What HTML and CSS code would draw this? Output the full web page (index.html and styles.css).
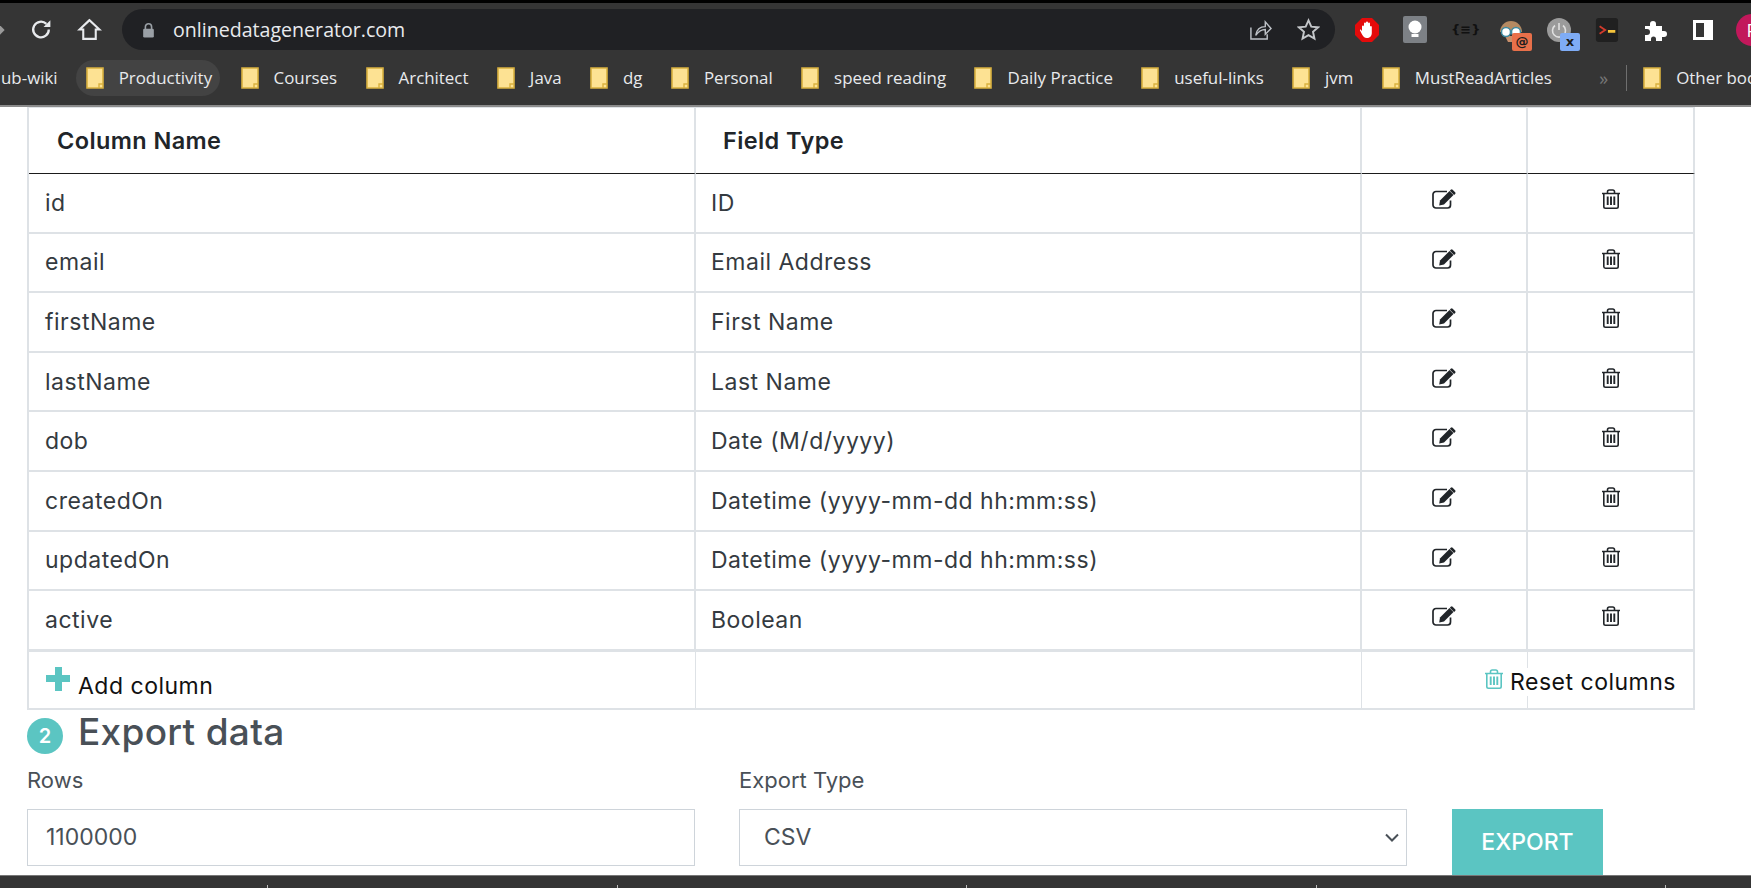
FILE: index.html
```html
<!DOCTYPE html>
<html>
<head>
    <meta charset="utf-8">
    <title>onlinedatagenerator.com</title>
    <link rel="stylesheet" href="styles.css">
</head>
<body>
    <svg class="defs" xmlns="http://www.w3.org/2000/svg">
        <symbol id="folder" viewBox="0 0 18 22">
            <path d="M1 1h16v20H1z" fill="#fde293" stroke="#d9b13f" stroke-width="1.6"/>
            <path d="M13 21v-4h4" fill="none" stroke="#d9b13f" stroke-width="1.4"/>
        </symbol>
        <symbol id="edit" viewBox="0 0 24 20">
            <path d="M18.500 11.500v4.500a3 3 0 0 1-3 3H4a3 3 0 0 1-3-3V5.500a3 3 0 0 1 3-3h11" fill="none" stroke="currentColor" stroke-width="1.700"/>
            <path d="M8 11.500 17.500 2l4 4-9.500 9.500-4.800 1z" fill="currentColor"/>
            <path d="M18.800.7a1.300 1.300 0 0 1 1.800 0l2.500 2.500a1.300 1.300 0 0 1 0 1.800l-1 1-4.300-4.300z" fill="currentColor"/>
        </symbol>
        <symbol id="trash" viewBox="0 0 20 20">
            <path d="M1 4.500h18M6.500 4.500V2.800a1.800 1.800 0 0 1 1.800-1.800h3.400a1.800 1.800 0 0 1 1.800 1.800v1.700M2.800 4.500v13a1.700 1.700 0 0 0 1.700 1.700h11a1.700 1.700 0 0 0 1.700-1.700v-13" fill="none" stroke="currentColor" stroke-width="1.600"/>
            <path d="M6.700 7.500v8.500M10 7.500v8.500M13.300 7.500v8.500" stroke="currentColor" stroke-width="1.900"/>
        </symbol>
    </svg>

    <div class="top-strip"></div>

    <header class="toolbar">
        <span class="back-arrow"></span>
        <svg class="tool reload" viewBox="0 0 24 24"><path d="M19 12a7.500 7.500 0 1 1-2.300-5.400" fill="none" stroke="#e8eaed" stroke-width="2.200"/><path d="M20.500 3v6.500H14z" fill="#e8eaed"/></svg>
        <svg class="tool home" viewBox="0 0 24 24"><path d="M12 3 2.500 12H6v9h12v-9h3.500z" fill="none" stroke="#e8eaed" stroke-width="2"/></svg>
        <div class="omnibox">
            <svg class="lock" viewBox="0 0 14 18"><path d="M3.500 8V5.500a3.500 3.500 0 0 1 7 0V8" fill="none" stroke="#9aa0a6" stroke-width="1.800"/><rect x="1" y="7.500" width="12" height="10" rx="1.500" fill="#9aa0a6"/></svg>
            <span class="url">onlinedatagenerator.com</span>
            <svg class="omni-icon share" viewBox="0 0 24 24"><path d="M2 10v12h17v-5" fill="none" stroke="#bdc1c6" stroke-width="1.500"/><path d="M7 18c1-6 5-9 10-9V4l6 7-6 6v-5c-4 0-7 2-10 6z" fill="none" stroke="#bdc1c6" stroke-width="1.500"/></svg>
            <svg class="omni-icon star" viewBox="0 0 24 24"><path d="m12 2.500 2.900 6.500 7.100.7-5.300 4.700 1.500 7L12 17.800l-6.200 3.600 1.500-7L2 9.700 9.100 9z" fill="none" stroke="#c4c7ca" stroke-width="2"/></svg>
        </div>
        <div class="extensions">
            <svg class="ext" viewBox="0 0 24 24"><path d="M7 0h10l7 7v10l-7 7H7l-7-7V7z" fill="#e40b0b"/><path d="M7 13V8.500a1 1 0 0 1 2 0V5.500a1 1 0 0 1 2 0V4.500a1 1 0 0 1 2 0v1a1 1 0 0 1 2 0v3.500a.9.900 0 0 1 1.800 0V15c0 3-2 5-5 5-2.500 0-3.500-1.500-5-4l-1.800-3.500c-.4-1 .8-1.300 1-.500z" fill="#fff"/></svg>
            <svg class="ext bulb" viewBox="0 0 24 27"><rect width="24" height="27" rx="2" fill="#7d8186"/><circle cx="12" cy="11" r="6.500" fill="#fff"/><rect x="8.500" y="18" width="7" height="3" fill="#fff"/></svg>
            <span class="ext ext-json">{≡}</span>
            <span class="ext ext-badged">
                <svg viewBox="0 0 24 24"><path d="M1 14a11 11 0 0 1 22 0z" fill="#b58a62"/><path d="M6 18h12l-3 6H9z" fill="#c98f6b"/><circle cx="7" cy="14" r="4.500" fill="#fff" stroke="#3d8aa0" stroke-width="1.500"/><circle cx="17" cy="14" r="4.500" fill="#fff" stroke="#3d8aa0" stroke-width="1.500"/></svg>
                <b class="ext-badge badge-orange">@</b>
            </span>
            <span class="ext ext-badged">
                <svg viewBox="0 0 24 24"><circle cx="12" cy="12" r="12" fill="#9b9b9b"/><path d="M12 5v7M8 7.500a6.500 6.500 0 1 0 8 0" fill="none" stroke="#e0e0e0" stroke-width="1.600"/></svg>
                <b class="ext-badge badge-blue">x</b>
            </span>
            <svg class="ext" viewBox="0 0 24 26"><rect width="24" height="26" rx="3" fill="#202020"/><path d="M4 9l6 4-6 4" fill="none" stroke="#d33b2c" stroke-width="2"/><rect x="13" y="13" width="8" height="3" fill="#f5c33b"/></svg>
            <svg class="ext puzzle" viewBox="0 0 24 24"><path d="M2 8h5V6a3 3 0 0 1 6 0v2h6v5h2a3 3 0 0 1 0 6h-2v4h-6v-2a2.500 2.500 0 0 0-5 0v2H2v-6h2a3 3 0 0 0 0-6H2z" fill="#fff"/></svg>
            <span class="side-panel"></span>
            <span class="profile">P</span>
        </div>
    </header>

    <nav class="bookmarks">
        <span class="bookmark cut">ub-wiki</span>
        <a class="bookmark hovered"><svg class="folder"><use href="#folder"/></svg>Productivity</a>
        <a class="bookmark"><svg class="folder"><use href="#folder"/></svg>Courses</a>
        <a class="bookmark"><svg class="folder"><use href="#folder"/></svg>Architect</a>
        <a class="bookmark"><svg class="folder"><use href="#folder"/></svg>Java</a>
        <a class="bookmark"><svg class="folder"><use href="#folder"/></svg>dg</a>
        <a class="bookmark"><svg class="folder"><use href="#folder"/></svg>Personal</a>
        <a class="bookmark"><svg class="folder"><use href="#folder"/></svg>speed reading</a>
        <a class="bookmark"><svg class="folder"><use href="#folder"/></svg>Daily Practice</a>
        <a class="bookmark"><svg class="folder"><use href="#folder"/></svg>useful-links</a>
        <a class="bookmark"><svg class="folder"><use href="#folder"/></svg>jvm</a>
        <a class="bookmark"><svg class="folder"><use href="#folder"/></svg>MustReadArticles</a>
        <span class="more">»</span>
        <span class="bm-sep"></span>
        <a class="bookmark"><svg class="folder"><use href="#folder"/></svg>Other bookmarks</a>
    </nav>

    <main class="page">
        <section class="columns">
            <div class="cell head">Column Name</div>
            <div class="cell head">Field Type</div>
            <div class="cell head"></div>
            <div class="cell head"></div>

            <div class="cell">id</div>
            <div class="cell">ID</div>
            <div class="cell action"><svg class="ico-edit"><use href="#edit"/></svg></div>
            <div class="cell action"><svg class="ico-trash"><use href="#trash"/></svg></div>

            <div class="cell">email</div>
            <div class="cell">Email Address</div>
            <div class="cell action"><svg class="ico-edit"><use href="#edit"/></svg></div>
            <div class="cell action"><svg class="ico-trash"><use href="#trash"/></svg></div>

            <div class="cell">firstName</div>
            <div class="cell">First Name</div>
            <div class="cell action"><svg class="ico-edit"><use href="#edit"/></svg></div>
            <div class="cell action"><svg class="ico-trash"><use href="#trash"/></svg></div>

            <div class="cell">lastName</div>
            <div class="cell">Last Name</div>
            <div class="cell action"><svg class="ico-edit"><use href="#edit"/></svg></div>
            <div class="cell action"><svg class="ico-trash"><use href="#trash"/></svg></div>

            <div class="cell">dob</div>
            <div class="cell">Date (M/d/yyyy)</div>
            <div class="cell action"><svg class="ico-edit"><use href="#edit"/></svg></div>
            <div class="cell action"><svg class="ico-trash"><use href="#trash"/></svg></div>

            <div class="cell">createdOn</div>
            <div class="cell">Datetime (yyyy-mm-dd hh:mm:ss)</div>
            <div class="cell action"><svg class="ico-edit"><use href="#edit"/></svg></div>
            <div class="cell action"><svg class="ico-trash"><use href="#trash"/></svg></div>

            <div class="cell">updatedOn</div>
            <div class="cell">Datetime (yyyy-mm-dd hh:mm:ss)</div>
            <div class="cell action"><svg class="ico-edit"><use href="#edit"/></svg></div>
            <div class="cell action"><svg class="ico-trash"><use href="#trash"/></svg></div>

            <div class="cell">active</div>
            <div class="cell">Boolean</div>
            <div class="cell action"><svg class="ico-edit"><use href="#edit"/></svg></div>
            <div class="cell action"><svg class="ico-trash"><use href="#trash"/></svg></div>

            <div class="cell foot add-col"><span class="plus"></span><span class="add-text">Add column</span></div>
            <div class="cell foot"></div>
            <div class="cell foot"></div>
            <div class="cell foot reset-cell">
                <a class="reset"><svg class="ico-trash teal"><use href="#trash"/></svg>Reset columns</a>
            </div>
        </section>

        <h2 class="export-title"><span class="step">2</span>Export data</h2>

        <form class="export-form">
            <label class="field">
                <span class="field-label">Rows</span>
                <input class="control" type="text" value="1100000">
            </label>
            <label class="field">
                <span class="field-label">Export Type</span>
                <span class="select-wrap">
                    <select class="control">
                        <option>CSV</option>
                    </select>
                    <svg class="chevron" viewBox="0 0 14 9"><path d="M1 1.500 7 7.500l6-6" fill="none" stroke="#495057" stroke-width="2"/></svg>
                </span>
            </label>
            <button class="export-btn" type="button">EXPORT</button>
        </form>
    </main>

    <footer class="bottom-bar">
        <i></i><i></i><i></i><i></i><i></i>
    </footer>
</body>
</html>
```

FILE: styles.css
```css
* {
    box-sizing: border-box;
}

html, body {
    margin: 0;
    height: 100%;
}

body {
    display: flex;
    flex-direction: column;
    height: 888px;
    overflow: hidden;
    background: #fff;
    font-family: Inter, "Open Sans", sans-serif;
    color: #212529;
}

.defs {
    display: none;
}

/* browser chrome */
.top-strip {
    height: 3px;
    background: #000;
    flex: none;
}

.toolbar {
    flex: none;
    height: 50px;
    background: #353535;
    display: flex;
    align-items: center;
    padding-top: 3px;
    position: relative;
    overflow: hidden;
}

.back-arrow {
    flex: none;
    width: 8px;
    height: 8px;
    margin-left: -5px;
    background: #9a9a9a;
    transform: rotate(45deg);
}

.tool {
    flex: none;
    width: 25px;
    height: 25px;
}

.reload {
    margin-left: 25.500px;
}

.home {
    margin-left: 23px;
}

.omnibox {
    flex: none;
    margin-left: 20.500px;
    width: 1213px;
    height: 41px;
    border-radius: 21px;
    background: #202124;
    display: flex;
    align-items: center;
    padding: 0 15px 0 20px;
}

.lock {
    width: 13px;
    height: 16px;
}

.url {
    margin-left: 18px;
    flex: 1;
    font-family: "Open Sans", sans-serif;
    font-size: 19.600px;
    color: #e8eaed;
}

.omni-icon {
    width: 23px;
    height: 23px;
}

.star {
    margin-left: 25px;
}

.extensions {
    display: flex;
    align-items: center;
    margin-left: 20px;
    gap: 24px;
    flex: none;
}

.ext {
    width: 24px;
    height: 24px;
    flex: none;
}

.bulb {
    height: 27px;
}

.ext-json {
    font-size: 13px;
    font-weight: 700;
    color: #111;
    text-align: center;
    line-height: 24px;
    font-family: "DejaVu Sans", sans-serif;
    white-space: nowrap;
}

.ext-badged {
    position: relative;
}

.ext-badged svg {
    width: 24px;
    height: 24px;
    display: block;
}

.ext-badge {
    position: absolute;
    right: -9px;
    bottom: -9px;
    width: 20px;
    height: 18px;
    border-radius: 2px;
    font: 700 13px/18px "DejaVu Sans", sans-serif;
    color: #1d1d1d;
    text-align: center;
}

.badge-orange {
    background: #e8704a;
}

.badge-blue {
    background: #7facf5;
}

.puzzle {
    margin-left: 0;
}

.side-panel {
    width: 20px;
    height: 20px;
    margin-left: 2px;
    border: 3px solid #fff;
    border-right-width: 9px;
    flex: none;
}

.profile {
    width: 32px;
    height: 32px;
    margin-left: -1px;
    border-radius: 50%;
    background: #c2185b;
    color: #fff;
    font: 18px/32px "Open Sans", sans-serif;
    text-align: center;
    flex: none;
}

.bookmarks {
    flex: none;
    height: 54px;
    padding-bottom: 3px;
    background: #353535;
    border-bottom: 2px solid #8b8b8b;
    display: flex;
    align-items: center;
    font-family: "Open Sans", sans-serif;
    font-size: 16.900px;
    color: #e8eaed;
    white-space: nowrap;
}

.bookmark {
    display: flex;
    align-items: center;
    height: 36px;
    padding: 0 8px 0 10px;
    margin-right: 10.400px;
    border-radius: 18px;
    flex: none;
}

.cut {
    margin-left: 0;
    padding: 0 0 0 1px;
    margin-right: 18px;
}

.hovered {
    background: #434343;
}

.folder {
    width: 18px;
    height: 22px;
    margin-right: 15px;
    flex: none;
}

.more {
    margin-left: 29px;
    color: #777;
    font-size: 18px;
    flex: none;
}

.bm-sep {
    flex: none;
    width: 1px;
    height: 26px;
    background: #6f6f6f;
    margin: 0 6px 0 18px;
}

/* page */
.page {
    flex: 1;
    min-height: 0;
    overflow: hidden;
    padding-left: 27px;
}

.columns {
    width: 1668px;
    display: grid;
    grid-template-columns: 667px 666px 166px 167px;
    grid-template-rows: 66px repeat(8, 59.6px) 59px;
    border-left: 2px solid #dee2e6;
    border-top: 1px solid #dee2e6;
}

.cell {
    display: flex;
    align-items: center;
    padding: 0 14px 0 15px;
    font-size: 23px;
    letter-spacing: .5px;
    color: #343a40;
    border-right: 2px solid #dee2e6;
    border-bottom: 2px solid #dee2e6;
}

.cell:nth-child(4n+1) {
    padding-left: 16px;
}

.head {
    font-weight: 600;
    font-size: 23.500px;
    letter-spacing: .4px;
    color: #212529;
    padding-left: 27px;
    border-bottom: 1px solid #1b1b1b;
}

.cell.head:nth-child(4n+1) {
    padding-left: 28px;
}

.action {
    justify-content: center;
    align-items: flex-start;
    padding: 15px 0 0;
}

.ico-edit {
    width: 24px;
    height: 20px;
    color: #212529;
}

.ico-trash {
    width: 20px;
    height: 20px;
    color: #212529;
}

.teal {
    color: #5bc5c2;
}

.foot {
    border-right-width: 1px;
    border-top: 2px solid #dee2e6;
    margin-top: -1px;
}

.add-col {
    color: #111;
    align-items: flex-start;
    padding-top: 15px;
}

.add-text {
    margin-top: 5px;
}

.plus {
    position: relative;
    width: 24px;
    height: 24px;
    margin: 0 8px 0 1px;
    background:
        linear-gradient(#5bc5c2, #5bc5c2) center / 24px 7px no-repeat,
        linear-gradient(#5bc5c2, #5bc5c2) center / 7px 24px no-repeat;
    border-radius: 2px;
}

.reset-cell {
    position: relative;
    border-right-width: 2px;
}

.reset {
    position: absolute;
    right: 17px;
    top: 16px;
    display: flex;
    align-items: center;
    gap: 6px;
    padding: 0 0 0 2px;
    background: #fff;
    color: #111;
    white-space: nowrap;
}

.reset .ico-trash {
    position: relative;
    top: -3px;
}

.export-title {
    margin: 0;
    display: flex;
    align-items: center;
    height: 44px;
    font-weight: 500;
    font-size: 37px;
    letter-spacing: .3px;
    color: #495057;
}

.step {
    width: 36px;
    height: 36px;
    border-radius: 50%;
    background: #5bc5c2;
    color: #fff;
    font-size: 20px;
    font-weight: 600;
    letter-spacing: 0;
    display: flex;
    align-items: center;
    justify-content: center;
    margin: 9px 15px 0 0;
}

.export-form {
    display: flex;
    gap: 44px;
    margin-top: 11px;
}

.field {
    display: flex;
    flex-direction: column;
    width: 668px;
}

.field-label {
    font-size: 22px;
    color: #495057;
    line-height: 30px;
    margin-bottom: 14px;
}

.control {
    width: 100%;
    height: 57px;
    padding: 0 18px;
    border: 1px solid #ced4da;
    border-radius: 0;
    background: #fff;
    font-family: Inter, sans-serif;
    font-size: 23px;
    color: #495057;
    outline: none;
    appearance: none;
}

select.control {
    padding-left: 24px;
}

.select-wrap {
    position: relative;
    display: block;
}

.chevron {
    position: absolute;
    right: 8px;
    top: 24px;
    width: 14px;
    height: 9px;
}

.export-btn {
    width: 151px;
    height: 66px;
    margin: 44px 0 0 1px;
    border: 0;
    background: #5bc5c2;
    color: #fff;
    font-family: Inter, sans-serif;
    font-size: 23px;
    font-weight: 500;
}

.bottom-bar {
    flex: none;
    height: 13px;
    background: #353535;
    border-top: 1px solid #777;
    display: flex;
    padding-left: 267px;
    gap: 348.500px;
}

.bottom-bar i {
    width: 1px;
    height: 5px;
    margin-top: 9px;
    background: #bbb;
}
```
